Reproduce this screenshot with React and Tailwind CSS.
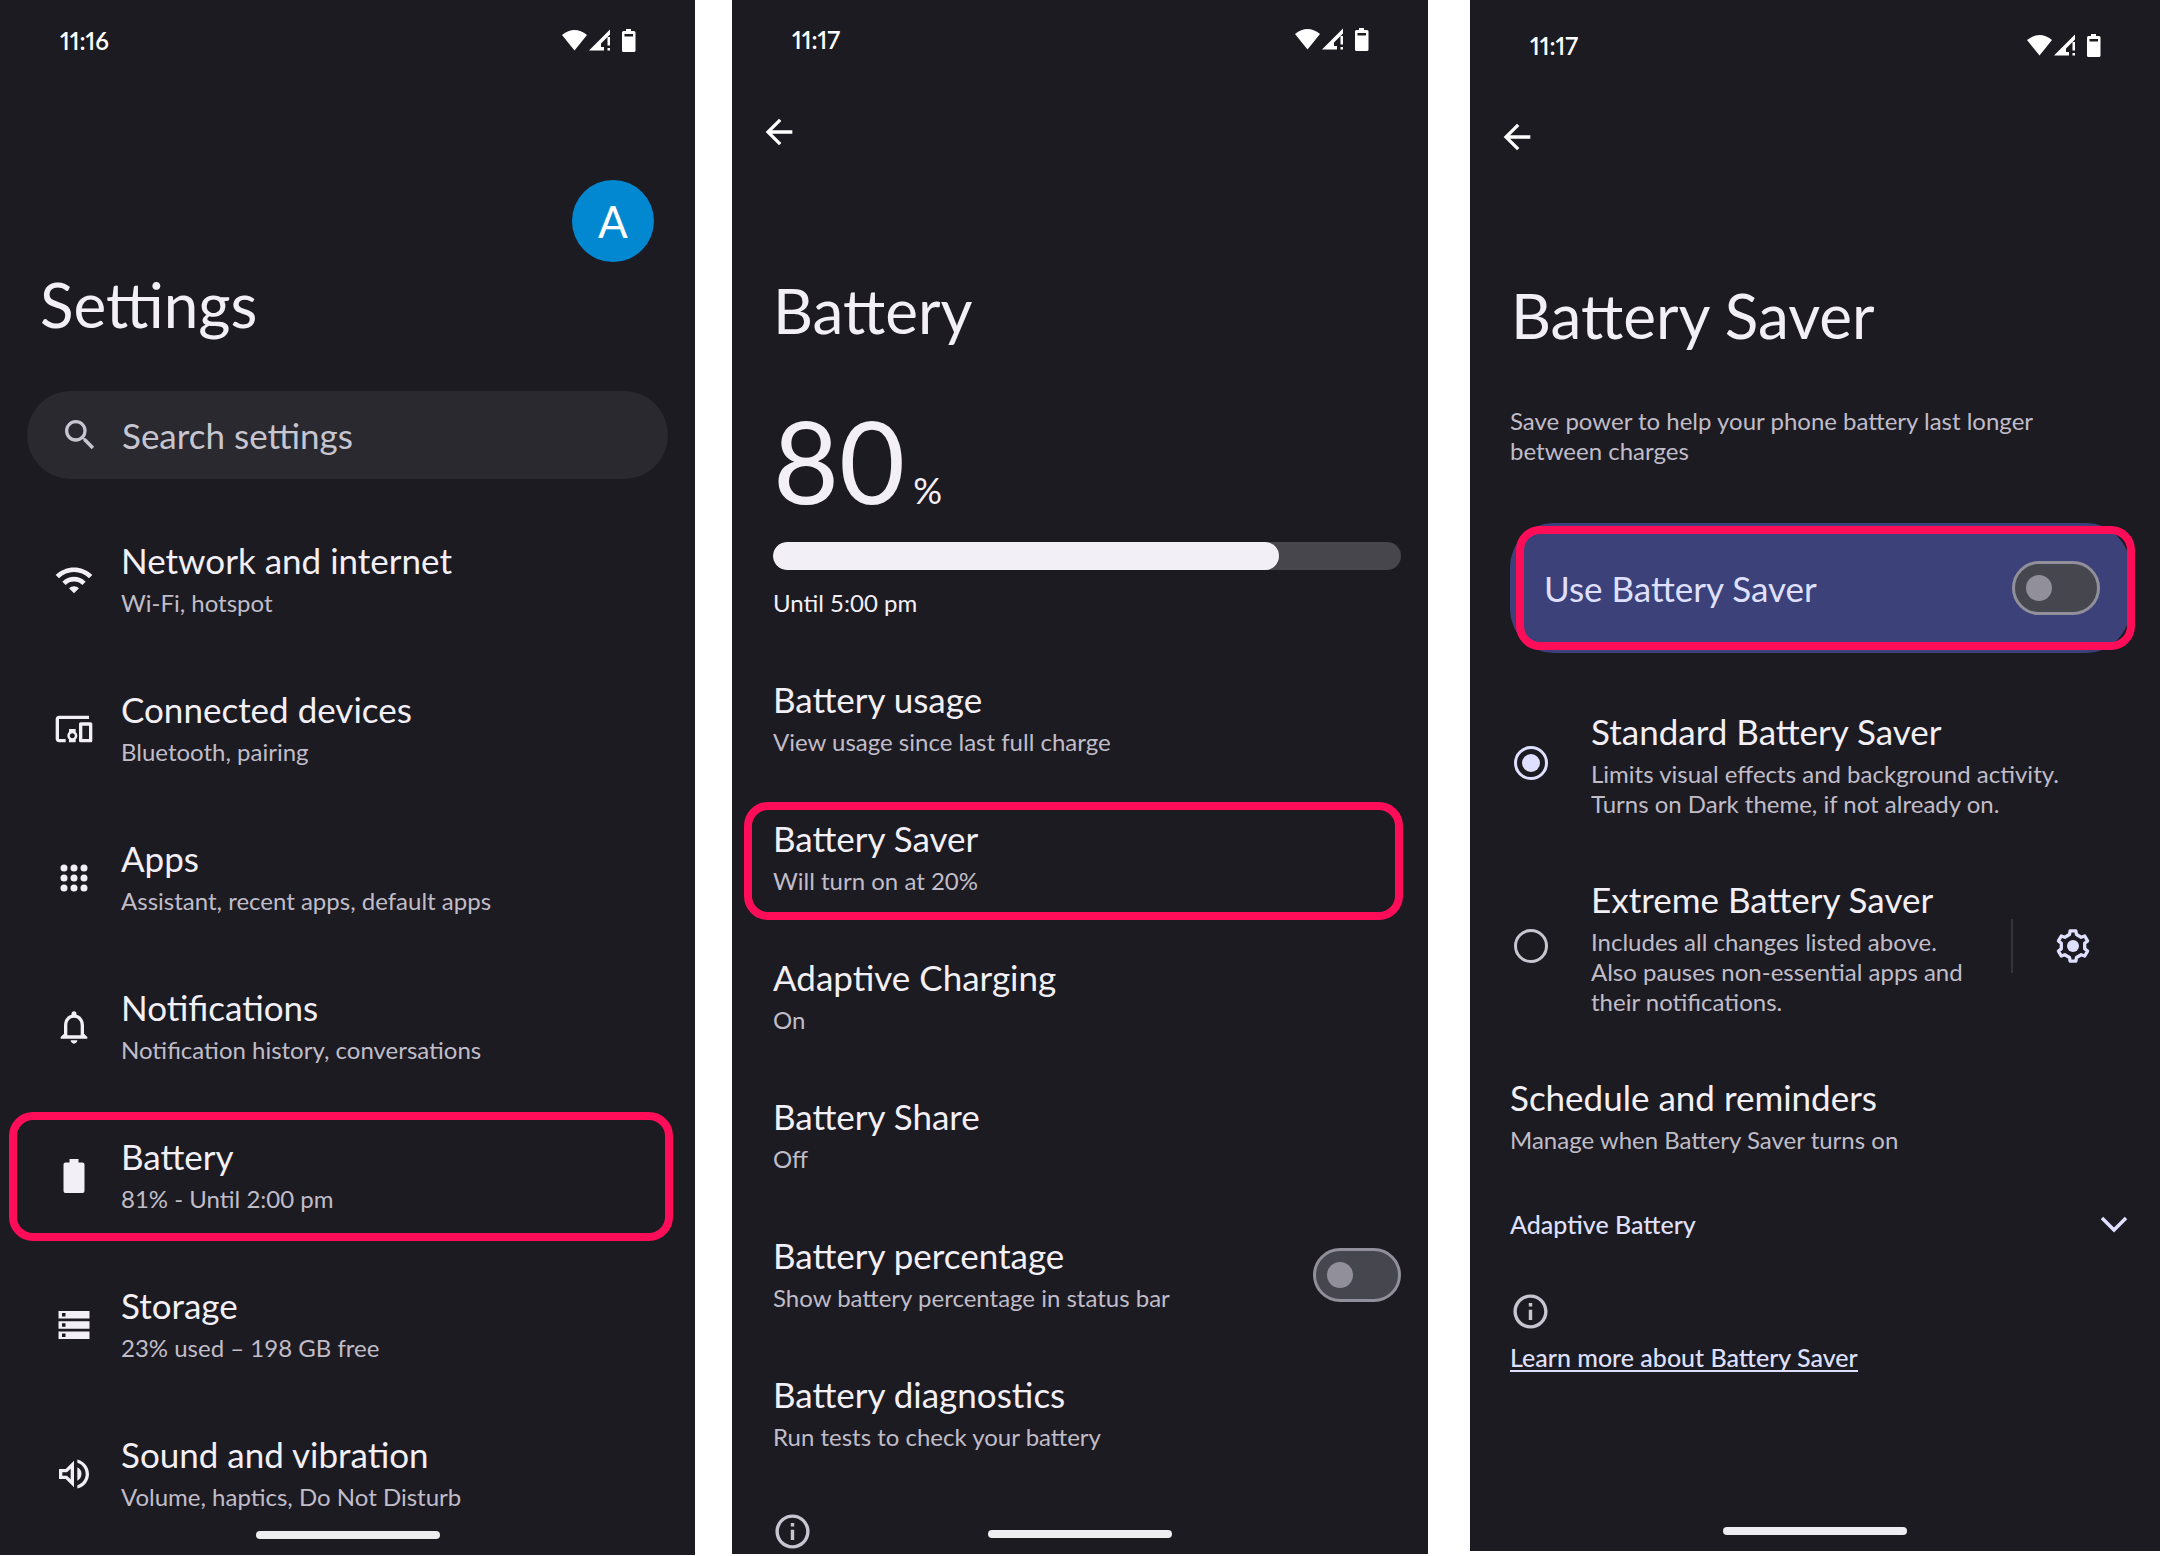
import { MdWifi, MdDevicesOther, MdNotificationsNone, MdOutlineVolumeUp, MdSearch, MdArrowBack, MdInfoOutline } from 'react-icons/md'

function StatusIcons() {
  return (
    <svg width="74" height="24" viewBox="0 0 74 24" fill="#fff" aria-hidden="true">
      <path d="M0 6Q12.500-4 25 6L12.500 21.500Z" />
      <path d="M27 21.500 48 0.500V5.500L39 14.500V18H42V21.500Z" />
      <rect x="45.500" y="8" width="2.500" height="8.500" />
      <rect x="45.500" y="19" width="2.500" height="2.500" />
      <path fillRule="evenodd" d="M64 0h5v2h3q1.500 0 1.500 1.500v18q0 1.500-1.500 1.500H61.500q-1.500 0-1.500-1.500v-18Q60 2 61.500 2H64ZM62.500 5v2.500h8.500V5Z" />
    </svg>
  )
}

function AppsIcon({ size, className }) {
  return (
    <svg width={size} height={size} viewBox="0 0 24 24" fill="currentColor" className={className} aria-hidden="true">
      {[6, 12, 18].map(y => [6, 12, 18].map(x => <circle key={`${x}-${y}`} cx={x} cy={y} r="2.100" />))}
    </svg>
  )
}

function BatteryIcon({ size, className }) {
  return (
    <svg width={size} height={size} viewBox="0 0 40 40" fill="currentColor" className={className} aria-hidden="true">
      <path d="M15.500 3h9v3.500h4q2 0 2 2V35q0 2-2 2h-17q-2 0-2-2V8.500q0-2 2-2h4Z" />
    </svg>
  )
}

function StorageIcon({ size, className }) {
  return (
    <svg width={size} height={size} viewBox="0 0 40 40" fill="currentColor" className={className} aria-hidden="true">
      {[6, 16.300, 26.600].map(y => (
        <path key={y} fillRule="evenodd" d={`M4.500 ${y}h31v7.400h-31ZM8 ${y + 2}v3.400h3.500v-3.400Z`} />
      ))}
    </svg>
  )
}

// six identical teeth, each rotated by 60deg
const gearPoints = [0, 60, 120, 180, 240, 300].flatMap(deg => {
  const a = (deg * Math.PI) / 180
  return [[-2.1, -6.9], [-1.7, -9.1], [1.7, -9.1], [2.1, -6.9]].map(([x, y]) =>
    `${12 + x * Math.cos(a) - y * Math.sin(a)},${12 + x * Math.sin(a) + y * Math.cos(a)}`
  )
}).join(' ')

function GearIcon() {
  return (
    <svg width="40" height="40" viewBox="0 0 24 24" fill="none" stroke="currentColor" strokeWidth="2" strokeLinejoin="round" aria-hidden="true">
      <polygon points={gearPoints} />
      <circle cx="12" cy="12" r="3.600" fill="currentColor" stroke="none" />
    </svg>
  )
}

const settings = [
  { icon: MdWifi, title: 'Network and internet', summary: 'Wi-Fi, hotspot' },
  { icon: MdDevicesOther, title: 'Connected devices', summary: 'Bluetooth, pairing' },
  { icon: AppsIcon, title: 'Apps', summary: 'Assistant, recent apps, default apps' },
  { icon: MdNotificationsNone, title: 'Notifications', summary: 'Notification history, conversations' },
  { icon: BatteryIcon, title: 'Battery', summary: '81% - Until 2:00 pm', highlight: true },
  { icon: StorageIcon, title: 'Storage', summary: '23% used – 198 GB free' },
  { icon: MdOutlineVolumeUp, title: 'Sound and vibration', summary: 'Volume, haptics, Do Not Disturb' },
]

const batteryItems = [
  { title: 'Battery usage', summary: 'View usage since last full charge' },
  { title: 'Battery Saver', summary: 'Will turn on at 20%', highlight: true },
  { title: 'Adaptive Charging', summary: 'On' },
  { title: 'Battery Share', summary: 'Off' },
  { title: 'Battery percentage', summary: 'Show battery percentage in status bar', toggle: 'battery-percentage' },
  { title: 'Battery diagnostics', summary: 'Run tests to check your battery' },
]

function StatusBar({ time }) {
  return (
    <div className="flex h-[48px] items-center justify-between pl-[60px] pr-[59px]">
      <span className="text-[24px] font-semibold proportional-nums leading-[30px] text-white">{time}</span>
      <StatusIcons />
    </div>
  )
}

function HomeBar() {
  return <div className="absolute bottom-4 left-1/2 h-2 w-[184px] -translate-x-1/2 rounded-full bg-[#eeedef]" />
}

function BackButton() {
  return (
    <button type="button" aria-label="Back" className="ml-[27px] flex size-10 items-center justify-center text-white">
      <MdArrowBack size={40} />
    </button>
  )
}

function Toggle({ id }) {
  return (
    <input
      id={id}
      type="checkbox"
      role="switch"
      className="h-[54px] w-[88px] shrink-0 appearance-none rounded-full border-[3px] border-[#918f9a] bg-[#46464f] before:ml-[11px] before:mt-[11px] before:block before:size-[26px] before:rounded-full before:bg-[#918f9a]"
    />
  )
}

function ItemText({ title, summary }) {
  return (
    <span className="block min-w-0 text-left">
      <span className="block text-[35px] leading-[48px] text-[#f2eff7]">{title}</span>
      <span className="mt-1 block text-[24px] leading-[30px] text-[#c0bdc9]">{summary}</span>
    </span>
  )
}

function SettingsScreen() {
  return (
    <section className="relative grow basis-[695px] bg-[#1c1b21] pb-[7px] pt-[17px]">
      <StatusBar time="11:16" />
      <div className="mt-[115px] flex justify-end pr-[41px]">
        <button type="button" aria-label="Account" className="size-[82px] rounded-full bg-[#0288d1] text-[44px] leading-[82px] text-white">A</button>
      </div>
      <h1 className="mt-1 pl-[40px] text-[62px] leading-[76px]">Settings</h1>
      <label className="mx-[27px] mt-[49px] flex h-[88px] items-center gap-[22px] rounded-full bg-[#2a292f] pl-[33px] text-[#c7c5d0]">
        <MdSearch size={40} className="shrink-0" />
        <input type="search" placeholder="Search settings" aria-label="Search settings" className="w-full bg-transparent text-[35px] leading-[48px] placeholder:text-[#c7c5d0]" />
      </label>
      <ul className="mt-[26px]">
        {settings.map(({ icon: Icon, title, summary, highlight }) => (
          <li key={title} className="relative">
            <button type="button" className="flex h-[149px] w-full items-center gap-[27px] pl-[54px]">
              <Icon size={40} className="shrink-0 text-[#f2eff7]" />
              <span className="pb-1.5">
                <ItemText title={title} summary={summary} />
              </span>
            </button>
            {highlight && <div className="pointer-events-none absolute bottom-[9px] left-[9px] right-[22px] top-[11px] rounded-3xl border-8 border-[#ff0d59]" />}
          </li>
        ))}
      </ul>
      <HomeBar />
    </section>
  )
}

function BatteryScreen() {
  return (
    <section className="relative ml-[37px] grow basis-[696px] bg-[#1c1b21] pb-[2px] pt-4">
      <StatusBar time="11:17" />
      <div className="mt-12">
        <BackButton />
      </div>
      <h1 className="mt-[120px] pl-[41px] text-[62px] leading-[76px]">Battery</h1>
      <div className="ml-[41px] mr-[27px]">
        <p className="mt-[52px] flex items-baseline gap-2">
          <span className="text-[114px] leading-[120px]">80</span>
          <span className="text-[36px] leading-[40px]">%</span>
        </p>
        <div className="mt-[22px] h-7 overflow-hidden rounded-full bg-[#46464c]">
          <div className="h-full rounded-full bg-[#f2eff7]" style={{ width: '80.500%' }} />
        </div>
        <p className="mt-[18px] text-[24px] leading-[30px]">Until 5:00 pm</p>
      </div>
      <ul className="mt-[31px]">
        {batteryItems.map(({ title, summary, highlight, toggle }) => (
          <li key={title} className="relative">
            {toggle ? (
              <label htmlFor={toggle} className="flex h-[139px] items-center justify-between pl-[41px] pr-[27px]">
                <span className="pb-1.5">
                  <ItemText title={title} summary={summary} />
                </span>
                <Toggle id={toggle} />
              </label>
            ) : (
              <button type="button" className="flex h-[139px] w-full items-center pb-1.5 pl-[41px]">
                <ItemText title={title} summary={summary} />
              </button>
            )}
            {highlight && <div className="pointer-events-none absolute bottom-[7px] left-[12px] right-[25px] top-[14px] rounded-3xl border-8 border-[#ff0d59]" />}
          </li>
        ))}
      </ul>
      <MdInfoOutline size={41} className="ml-[40px] mt-[28px] text-[#c7c5d0]" />
      <HomeBar />
    </section>
  )
}

function ModeRadio({ id, title, summary, defaultChecked }) {
  return (
    <label htmlFor={id} className="flex grow items-center gap-[43px]">
      <input
        id={id}
        type="radio"
        name="saver-mode"
        defaultChecked={defaultChecked}
        className="flex size-[34px] shrink-0 appearance-none items-center justify-center rounded-full border-[3px] border-[#c7c5d0] checked:border-[#dfe0ff] checked:before:size-[18px] checked:before:rounded-full checked:before:bg-[#dfe0ff]"
      />
      <ItemText title={title} summary={summary} />
    </label>
  )
}

function BatterySaverScreen() {
  return (
    <section className="relative ml-[42px] grow basis-[690px] bg-[#1c1b21] pb-[178px] pt-[22px]">
      <StatusBar time="11:17" />
      <div className="mt-[47px]">
        <BackButton />
      </div>
      <h1 className="mt-[120px] pl-[41px] text-[62px] leading-[76px]">Battery Saver</h1>
      <div className="ml-[40px] mr-[30px]">
        <p className="mt-[53px] w-[560px] text-[24px] leading-[30px] text-[#c0bdc9]">Save power to help your phone battery last longer between charges</p>
        <div className="relative mt-[57px]">
          <label htmlFor="use-saver" className="flex h-[130px] items-center justify-between rounded-[44px] bg-[#3c4279] pl-[34px] pr-[30px] text-[35px] leading-[48px] text-[#dfe0ff]">
            Use Battery Saver
            <Toggle id="use-saver" />
          </label>
          <div className="pointer-events-none absolute -right-[5px] bottom-[3px] left-[6px] top-[3px] rounded-3xl border-8 border-[#ff0d59]" />
        </div>
        <div className="mt-[54px] pl-1">
          <ModeRadio
            id="standard"
            defaultChecked
            title="Standard Battery Saver"
            summary={<>Limits visual effects and background activity.<br />Turns on Dark theme, if not already on.</>}
          />
        </div>
        <div className="mt-[56px] flex items-center pl-1">
          <ModeRadio
            id="extreme"
            title="Extreme Battery Saver"
            summary={<>Includes all changes listed above.<br />Also pauses non-essential apps and<br />their notifications.</>}
          />
          <div className="h-[54px] w-[2px] bg-[#35343b]" />
          <button type="button" aria-label="Extreme Battery Saver settings" className="ml-[40px] mr-[37px] text-[#dfe0ff]">
            <GearIcon />
          </button>
        </div>
        <button type="button" className="mt-[56px] block">
          <ItemText title="Schedule and reminders" summary="Manage when Battery Saver turns on" />
        </button>
        <button type="button" className="mt-[54px] flex w-full items-center justify-between pr-[2px] text-[25px] font-medium leading-[30px] text-[#dfe0ff]">
          Adaptive Battery
          <svg width="28" height="18" viewBox="0 0 28 18" fill="none" stroke="currentColor" strokeWidth="3.500" aria-hidden="true">
            <path d="M2 3l12 12L26 3" />
          </svg>
        </button>
        <MdInfoOutline size={41} className="mt-[52px] text-[#c7c5d0]" />
        <a href="#learn-more" className="mt-[12px] inline-block border-b-2 border-[#dfe0ff] text-[25px] font-medium leading-[26px] text-[#dfe0ff]">Learn more about Battery Saver</a>
      </div>
      <HomeBar />
    </section>
  )
}

export default function App() {
  return (
    <main className="flex items-start bg-white font-['Lato',sans-serif] text-[#f2eff7]">
      <SettingsScreen />
      <BatteryScreen />
      <BatterySaverScreen />
    </main>
  )
}
